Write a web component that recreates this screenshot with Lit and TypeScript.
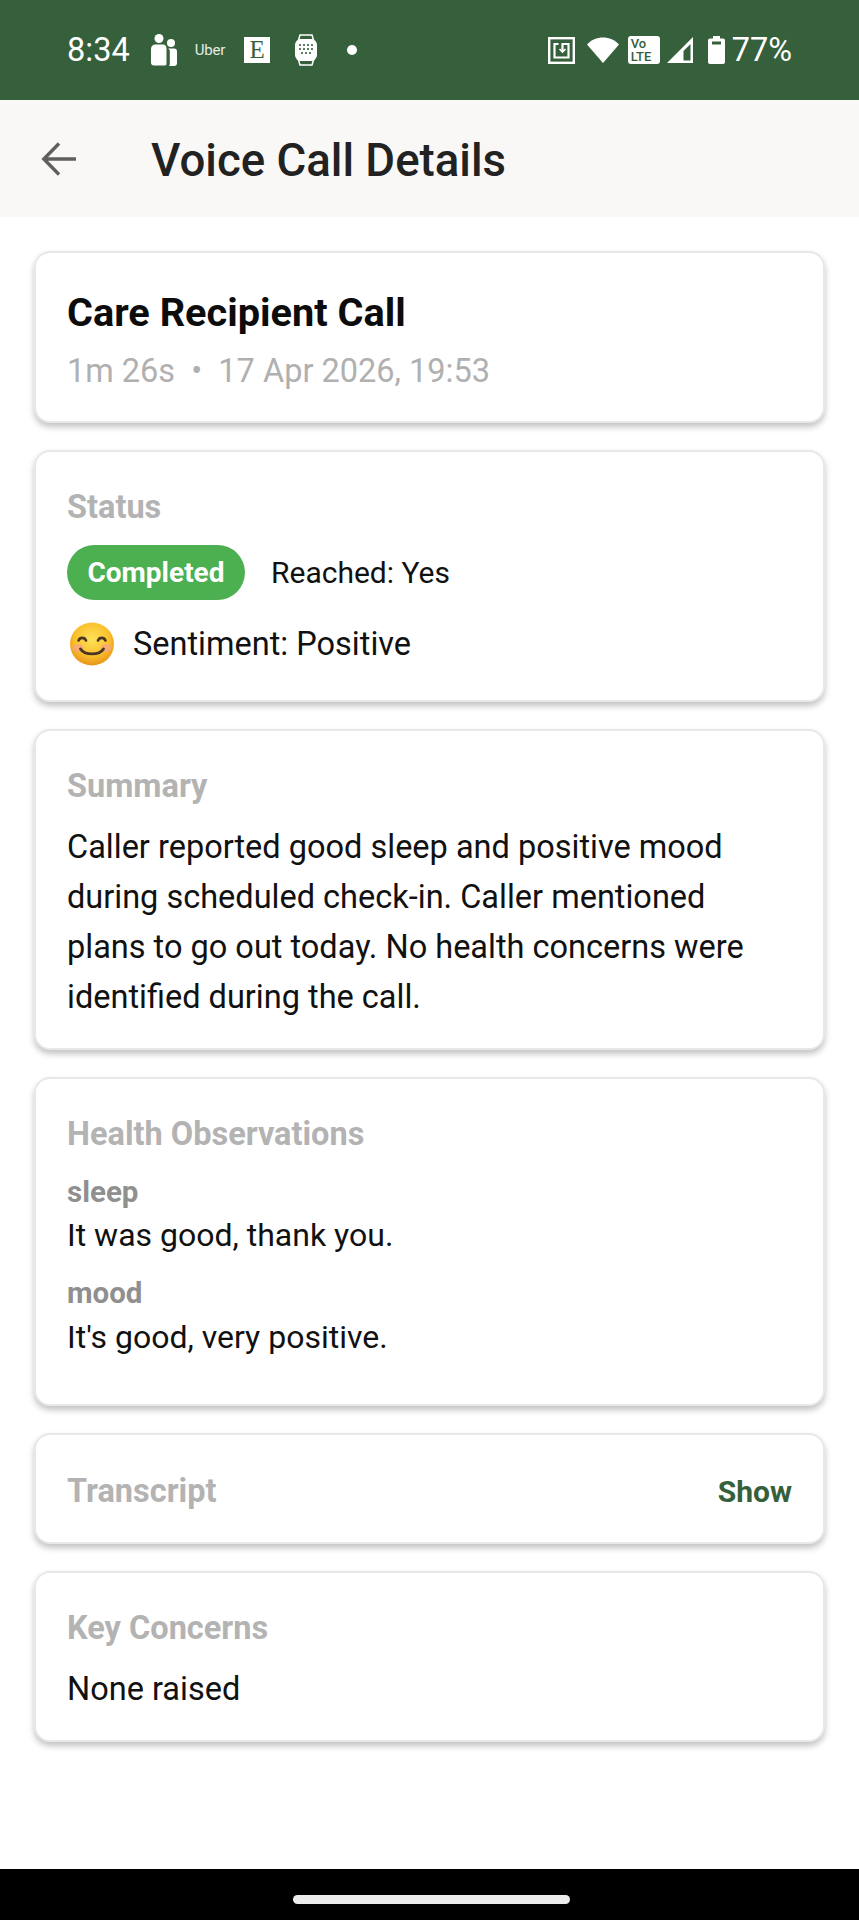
import { LitElement, html, css, svg } from 'lit';
import { customElement } from 'lit/decorators.js';

const peopleIcon = svg`<svg width="27" height="32" viewBox="0 0 27 32" fill="#fff">
  <circle cx="9" cy="4.5" r="4.5"/><circle cx="21" cy="9" r="4"/>
  <path d="M1 15c0-3 2-4.500 4-4.500h8c2 0 3.500 1.500 3.500 4v15c0 1-.5 2-1.500 2H4c-2 0-3-1-3-3z"/>
  <path d="M18 14.500h6c2 0 3 1 3 3V29c0 2-1 3-3 3h-5c.5-.5.800-1.500.800-2.500V17c0-1-.800-2-1.800-2.500z"/>
</svg>`;

const watchIcon = svg`<svg width="22" height="32" viewBox="0 0 22 32" fill="#fff">
  <path d="M5 1h12l1.500 5h-15zM3.500 26h15L17 31H5z" fill="none" stroke="#fff" stroke-width="1.5"/>
  <rect x="0" y="5" width="22" height="22" rx="6"/>
  <g fill="#36603b">
    <circle cx="5" cy="11" r="1.1"/><circle cx="9" cy="11" r="1.1"/><circle cx="13" cy="11" r="1.1"/><circle cx="17" cy="11" r="1.1"/>
    <circle cx="5" cy="15" r="1.1"/><circle cx="9" cy="15" r="1.1"/><circle cx="13" cy="15" r="1.1"/><circle cx="17" cy="15" r="1.1"/>
    <circle cx="7" cy="19" r="1.1"/><circle cx="11" cy="19" r="1.1"/><circle cx="15" cy="19" r="1.1"/>
  </g>
</svg>`;

const nfcIcon = svg`<svg width="27" height="27" viewBox="0 0 27 27" fill="none" stroke="#fff">
  <rect x="1.2" y="1.2" width="24.6" height="24.6" stroke-width="2.4"/>
  <path d="M10.5 7H6.5v13.5h14V7H14.5v7.5" stroke-width="2.2"/>
  <path d="M11.5 12l3 3 3-3" stroke-width="1.6"/>
</svg>`;

const wifiIcon = svg`<svg width="32" height="26" viewBox="0 0 32 26" fill="#fff">
  <path d="M0 7.5C4 3 10 .5 16 .5S28 3 32 7.5L16 26z"/>
</svg>`;

const signalIcon = svg`<svg width="26" height="26" viewBox="0 0 26 26" fill="#fff">
  <path fill-rule="evenodd" d="M26 0v26H0zM23.5 7l-7 7v9.5h7z"/>
</svg>`;

const batteryIcon = svg`<svg width="17" height="28" viewBox="0 0 17 28" fill="#fff">
  <path fill-rule="evenodd" d="M5 0h7v2.500h3c1.200 0 2 .8 2 2V26c0 1.200-.8 2-2 2H2c-1.200 0-2-.8-2-2V4.500c0-1.200.8-2 2-2h3zM4 5.500v3h9v-3z"/>
</svg>`;

const backIcon = svg`<svg width="36" height="36" viewBox="0 0 36 36" fill="none" stroke="#5f5f5f" stroke-width="3.4">
  <path d="M35 18H3M18 2.5 2.800 18 18 33.500"/>
</svg>`;

const smileEmoji = svg`<svg width="46" height="44" viewBox="0 0 46 44">
  <defs>
    <radialGradient id="face" cx="50%" cy="38%" r="60%">
      <stop offset="0" stop-color="#fde25a"/><stop offset=".65" stop-color="#fbc02d"/><stop offset="1" stop-color="#e9981a"/>
    </radialGradient>
  </defs>
  <ellipse cx="23" cy="22" rx="22" ry="21.5" fill="url(#face)"/>
  <ellipse cx="9" cy="26" rx="5.5" ry="4" fill="#f5a48a" opacity=".7"/>
  <ellipse cx="37" cy="26" rx="5.5" ry="4" fill="#f5a48a" opacity=".7"/>
  <path d="M9.500 18.500c1.500-3.500 6-3.500 7.500 0M29 18.500c1.500-3.500 6-3.500 7.500 0" fill="none" stroke="#4a3524" stroke-width="2.6" stroke-linecap="round"/>
  <path d="M11.500 27c4 6.500 19 6.500 23 0" fill="none" stroke="#4a3524" stroke-width="2.8" stroke-linecap="round"/>
</svg>`;

@customElement('app-root')
export class AppRoot extends LitElement {
  static styles = css`
    :host {
      display: block;
      height: 1920px;
      background: #fff;
      font-family: Roboto, "Liberation Sans", sans-serif;
      color: #111;
      overflow: hidden;
    }

    .screen {
      display: flex;
      flex-direction: column;
      height: 100%;
    }

    /* Android status bar */
    .status-bar {
      height: 100px;
      flex: none;
      box-sizing: border-box;
      background: #36603b;
      color: #fff;
      display: flex;
      align-items: center;
      justify-content: space-between;
      padding: 0 67px;
    }
    .status-left, .status-right {
      display: flex;
      align-items: center;
    }
    .clock {
      font-size: 32.5px;
      margin-right: 20px;
    }
    .uber {
      font-size: 15px;
      margin: 0 19px 0 18px;
      letter-spacing: -0.2px;
      color: #e4ece4;
    }
    .etsy {
      width: 26px;
      height: 26px;
      background: #fff;
      color: #36603b;
      font-family: "Liberation Serif", serif;
      font-size: 25px;
      line-height: 26px;
      text-align: center;
      margin-right: 25px;
    }
    .dot {
      width: 10px;
      height: 10px;
      border-radius: 50%;
      background: #fff;
      margin-left: 30px;
    }
    .volte {
      width: 32px;
      height: 28px;
      box-sizing: border-box;
      border-radius: 3px;
      background: #fff;
      color: #36603b;
      font-size: 13px;
      font-weight: 500;
      line-height: 12.5px;
      padding: 2px 0 0 3px;
      margin: 0 7px 0 9px;
    }
    .status-right .wifi { margin-left: 12px; display: flex; }
    .status-right .battery { margin-left: 15px; display: flex; }
    .percent {
      font-size: 32.5px;
      margin-left: 7px;
    }

    .app-bar {
      height: 117px;
      flex: none;
      background: #f9f8f6;
      display: flex;
      align-items: center;
      padding-left: 41px;
    }
    .app-bar svg { display: block; }
    .app-bar h1 {
      margin: 4px 0 0 74px;
      font-size: 45.6px;
      font-weight: 500;
      color: #222;
    }

    .content {
      flex: 1;
      display: flex;
      flex-direction: column;
      gap: 27px;
      padding: 34px 34px 0;
    }

    .card {
      background: #fff;
      border: 2px solid #e8e8e8;
      border-radius: 16px;
      box-shadow: 0 4px 6px rgba(0, 0, 0, 0.24);
      padding: 37px 31px 27px;
    }
    .heading { padding-top: 38px; padding-bottom: 30px; }

    .title {
      font-size: 39.7px;
      line-height: 44px;
      font-weight: 700;
      color: #0c0c0c;
    }
    .subtitle {
      margin-top: 16px;
      font-size: 32.5px;
      line-height: 40px;
      color: #b0b0b0;
    }
    .label {
      font-size: 32.5px;
      line-height: 36px;
      font-weight: 700;
      color: #b3b3b3;
    }
    .body {
      font-size: 32.5px;
      line-height: 50px;
      color: #111;
    }

    .status-card { padding-bottom: 34px; }
    .status-row {
      display: flex;
      align-items: center;
      margin-top: 20px;
    }
    .pill {
      height: 55px;
      width: 178px;
      border-radius: 28px;
      background: #4caf50;
      color: #fff;
      font-size: 28px;
      font-weight: 700;
      display: flex;
      align-items: center;
      justify-content: center;
    }
    .reached {
      margin-left: 26px;
      font-size: 30px;
    }
    .sentiment {
      display: flex;
      align-items: center;
      margin-top: 22px;
      margin-left: 2px;
      font-size: 32.5px;
    }
    .sentiment svg { display: block; margin-right: 18px; }

    .summary { padding-bottom: 26px; }
    .summary-text { margin-top: 18px; }

    .obs-key {
      font-size: 29.5px;
      line-height: 34px;
      font-weight: 700;
      color: #8f8f8f;
      margin-top: 21px;
    }
    .label + .obs-key { margin-top: 23px; }
    .obs-value {
      font-size: 32px;
      line-height: 40px;
      margin-top: 7px;
    }
    .label + .obs-key + .obs-value { margin-top: 6px; }
    .health { padding-bottom: 47px; }

    .transcript {
      display: flex;
      align-items: center;
      justify-content: space-between;
      padding-top: 38px;
      padding-bottom: 33px;
    }
    .show {
      font-size: 30px;
      font-weight: 700;
      color: #36603b;
    }

    .concerns-text { margin-top: 18px; }
    .concerns { padding-bottom: 26px; }

    .nav-bar {
      height: 51px;
      flex: none;
      background: #000;
      display: flex;
      align-items: flex-start;
      justify-content: center;
    }
    .home-pill {
      width: 277px;
      height: 9px;
      margin: 26px 0 0 3px;
      border-radius: 5px;
      background: #ececec;
    }
  `;

  render() {
    return html`
      <div class="screen">
        <div class="status-bar">
          <div class="status-left">
            <span class="clock">8:34</span>
            ${peopleIcon}
            <span class="uber">Uber</span>
            <span class="etsy">E</span>
            ${watchIcon}
            <span class="dot"></span>
          </div>
          <div class="status-right">
            ${nfcIcon}
            <span class="wifi">${wifiIcon}</span>
            <span class="volte">Vo<br />LTE</span>
            ${signalIcon}
            <span class="battery">${batteryIcon}</span>
            <span class="percent">77%</span>
          </div>
        </div>

        <div class="app-bar">
          ${backIcon}
          <h1>Voice Call Details</h1>
        </div>

        <div class="content">
          <section class="card heading">
            <div class="title">Care Recipient Call</div>
            <div class="subtitle">1m 26s &nbsp;•&nbsp; 17 Apr 2026, 19:53</div>
          </section>

          <section class="card status-card">
            <div class="label">Status</div>
            <div class="status-row">
              <span class="pill">Completed</span>
              <span class="reached">Reached: Yes</span>
            </div>
            <div class="sentiment">${smileEmoji}<span>Sentiment: Positive</span></div>
          </section>

          <section class="card summary">
            <div class="label">Summary</div>
            <div class="body summary-text">
              Caller reported good sleep and positive mood during scheduled check-in. Caller mentioned
              plans to go out today. No health concerns were identified during the call.
            </div>
          </section>

          <section class="card health">
            <div class="label">Health Observations</div>
            <div class="obs-key">sleep</div>
            <div class="obs-value">It was good, thank you.</div>
            <div class="obs-key">mood</div>
            <div class="obs-value">It's good, very positive.</div>
          </section>

          <section class="card transcript">
            <span class="label">Transcript</span>
            <span class="show">Show</span>
          </section>

          <section class="card concerns">
            <div class="label">Key Concerns</div>
            <div class="body concerns-text">None raised</div>
          </section>
        </div>

        <div class="nav-bar"><div class="home-pill"></div></div>
      </div>
    `;
  }
}
